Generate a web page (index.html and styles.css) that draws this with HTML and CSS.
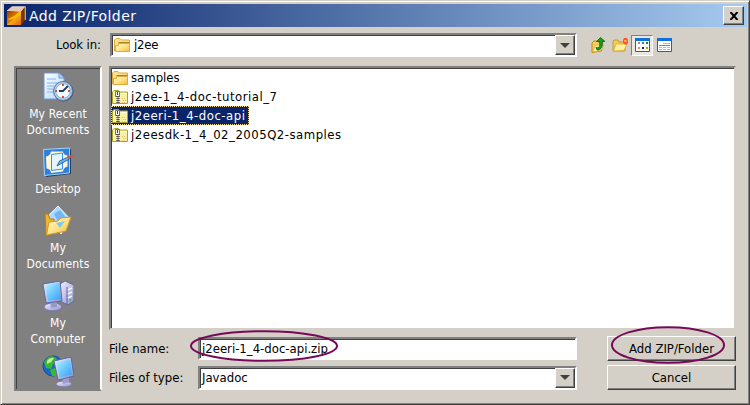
FILE: index.html
```html
<!DOCTYPE html>
<html lang="en">
<head>
<meta charset="utf-8">
<title>Add ZIP/Folder</title>
<link rel="stylesheet" href="styles.css">
</head>
<body>
<svg class="defs" width="0" height="0" aria-hidden="true">
  <defs>
    <linearGradient id="gold" x1="0" y1="0" x2="1" y2="1"><stop offset="0" stop-color="#fffbd0"/><stop offset=".5" stop-color="#ffe58a"/><stop offset="1" stop-color="#f0b840"/></linearGradient>
    <linearGradient id="screen" x1="0" y1="0" x2="1" y2="1"><stop offset="0" stop-color="#b8f4ff"/><stop offset=".5" stop-color="#6cc8fc"/><stop offset="1" stop-color="#3c9cf4"/></linearGradient>
    <linearGradient id="metal" x1="0" y1="0" x2="1" y2="1"><stop offset="0" stop-color="#f4f4ff"/><stop offset="1" stop-color="#8c8cc8"/></linearGradient>
    <linearGradient id="paper" x1="0" y1="0" x2="1" y2="1"><stop offset="0" stop-color="#fff"/><stop offset="1" stop-color="#b4d8fc"/></linearGradient>
    <linearGradient id="cube" x1="0" y1="0" x2="1" y2="1"><stop offset="0" stop-color="#9c4800"/><stop offset=".45" stop-color="#e07800"/><stop offset=".55" stop-color="#f8a820"/><stop offset="1" stop-color="#e06000"/></linearGradient>
    <symbol id="folder" viewBox="0 0 16 16">
      <path d="M.5 14V3L2 1.500h4L7.500 3H15.500V14Z" fill="#fbe08c" stroke="#dca83c"/>
      <path d="M4.500 5.500h11" stroke="#b08020"/>
      <path d="M1.500 14.500V8.500h3V6.500h11v8Z" fill="url(#gold)" stroke="#e0ac3c"/>
    </symbol>
    <symbol id="zip" viewBox="0 0 16 16">
      <path d="M.5 14.500V3L2 1.500h4.500L8 3h7.500v11.500Z" fill="#f8f2a4" stroke="#aaa426"/>
      <path d="M9 4.500h6" stroke="#fffde0"/>
      <path d="M3.500 2.500h4v5h-4z" fill="#f4f4f4" stroke="#777"/>
      <path d="M5 3h1v3H5z" fill="#444"/>
      <path d="M6 7v8" stroke="#222" stroke-width="3" stroke-dasharray="1 1"/>
      <path d="M6 7v8" stroke="#888"/>
      <path d="M10 9h1v1h-1zm2 0h1v1h-1zm-1 2h1v1h-1zm2 0h1v1h-1zm-3 2h1v1h-1zm2 0h1v1h-1z" fill="#f0b870"/>
    </symbol>
  </defs>
</svg>
<div class="window">
  <header class="titlebar">
    <svg class="app" viewBox="0 0 20 20"><path d="M1 5 6 1h13v13l-4 5H1Z" fill="#743000"/><path d="M1 5 6 1h13l-4 5Z" fill="#e8c8b8"/><path d="M1 6h14v13H1Z" fill="url(#cube)"/><path d="M2 13 8 10l5-4h2v2l-5 4-7 2Z" fill="#f8bc00"/><path d="M15 6 19 1v13l-4 5Z" fill="#763800"/><path d="M1 5 6 .7h13.300V14" fill="none" stroke="#fff3df" stroke-width=".8"/></svg>
    <h1>Add ZIP/Folder</h1>
    <button class="close" aria-label="Close"><svg width="10" height="8" viewBox="0 0 10 8"><path d="m1.500 0 7 8m0-8-7 8" stroke="#000" stroke-width="2"/></svg></button>
  </header>
  <div class="toolbar">
    <span class="lookin">Look in:</span>
    <div class="combo place"><svg class="small" viewBox="0 0 16 16"><use href="#folder"/></svg><span class="snug">j2ee</span><i class="arrow"></i></div>
    <div class="tools">
      <span class="tool"><svg width="16" height="16" viewBox="0 0 16 16"><path d="M2 15.500V6l2-2h3l1.500 1h4L11.500 14Z" fill="#f4d060" stroke="#b88818"/><path d="m2.500 15 3-7H14l-3 5.500Z" fill="#fff0a0" stroke="#dda820" stroke-width=".7"/><path d="M6 10.500c4 1 4-2 3.500-6H6.500L10.500.5l4.500 4h-2.800C12.700 9 12 13 7 13Z" fill="#179b20" stroke="#086410" stroke-width=".8"/></svg></span>
      <span class="tool"><svg width="16" height="16" viewBox="0 0 16 16"><path d="M1 14V4l1-1h4l1 2h6v9Z" fill="#f3cc57" stroke="#c89830"/><path d="M1.500 14 4 7h11l-3 6.500Z" fill="#fff1a0" stroke="#dda830" stroke-width=".8"/><path d="M12 1h3l1 2v3l-2 2-3-2V3Z" fill="#ff5428"/><path d="M12.500 3h2v2h-2z" fill="#ffd060"/></svg></span>
      <span class="tool pressed"><svg width="15" height="14" viewBox="0 0 15 14"><path d="M.5.5h14v13H.5Z" fill="#fff" stroke="#0868c8"/><path d="M0 0h15v3H0z" fill="#1070d8"/><path d="M3 4h2v2H3z" fill="#8c8c9c"/><path d="M7 4h2v2H7z" fill="#2488d8"/><path d="M11 4h2v2h-2z" fill="#109020"/><path d="M3 9h2v2H3z" fill="#f08060"/><path d="M7 9h2v2H7z" fill="#082888"/><path d="M11 9h2v2h-2z" fill="#c89800"/></svg></span>
      <span class="tool"><svg width="15" height="14" viewBox="0 0 15 14"><path d="M.5.5h14v13H.5Z" fill="#fff" stroke="#0868c8"/><path d="M0 0h15v3H0z" fill="#1070d8"/><path d="M6 5.500h7M2 9.500h3m1 0h3m1 0h3M2 11.500h3m1 0h3m1 0h3" stroke="#b4b8bc"/><path d="M2 7.500h11" stroke="#4090e0"/></svg></span>
    </div>
  </div>
  <main class="content">
    <nav class="places">
      <a><svg viewBox="0 0 32 32"><path d="M2 2h15l5 5v21H2Z" fill="url(#paper)" stroke="#6898e0"/><path d="M17 2v5h5" fill="#b0d0ff" stroke="#6898e0"/><path d="M5 8h9M5 12h11M5 15h7M5 18h6M5 21h6" stroke="#80b4f4"/><circle cx="21.500" cy="20.500" r="10" fill="#454f70"/><circle cx="21" cy="20" r="9.500" fill="#b4d0ec" stroke="#5878a8"/><circle cx="21" cy="20" r="7.300" fill="#f4fbff" stroke="#8cb0d8"/><path d="m26 15-5 5h-4" fill="none" stroke="#243864" stroke-width="1.800"/><path d="M20 13h2v2h-2zm0 12h2v2h-2zm-7-6h2v2h-2zm13 0h2v2h-2z" fill="#e85020"/></svg><span>My Recent</span><span>Documents</span></a>
      <a><svg viewBox="0 0 32 32"><path d="M3 4 29 3v25L4 31Z" fill="#263a60"/><path d="M1.500 3.500 27.500 2v25L2.500 29.500Z" fill="#2f80dc" stroke="#9cd8fc"/><path d="M9 5.500h12q0 3 4.500 4v11q-4 1-4.500 5l-12 1.500q0-4-4.500-4.500l-.5-12Q8 10 9 5.500Z" fill="#fff6d4"/><path d="m9.500 8.500 11-1.500v16l-11 1.500Z" fill="#e4f4ff" stroke="#3890e0"/><path d="m15 20 2.500-5 8.500-4 1.500 2-9 5Z" fill="#62b4ec" stroke="#284c80" stroke-width=".8"/><path d="m25 11 5-2.500 1.500 1.500-4.500 3Z" fill="#e05038"/></svg><span>Desktop</span></a>
      <a><svg viewBox="0 0 32 32"><path d="M5 12 16 1l12 13-9 15Z" fill="#acd8ff" stroke="#e8faff"/><path d="m12 9 6-4 6 8-7 5Z" fill="#6eb6f8"/><path d="M3 9h3l2 5h4v13l-8 4Z" fill="#efb52c" stroke="#b87814"/><path d="m4.500 30 2.500-13 9-1 3-3 10-1-5 14-19 4Z" fill="url(#gold)" stroke="#d49824"/><path d="m14 18 9-2-5 7Z" fill="#80c8f4"/></svg><span>My</span><span>Documents</span></a>
      <a><svg viewBox="0 0 32 32"><path d="m18 4 5-3 9 4v16l-6 4-8-4Z" fill="url(#metal)" stroke="#6868a0"/><path d="M25 7v18" stroke="#6464a8"/><path d="m26 10 4-2m-4 6 4-2m-4 6 4-2" stroke="#f4f4ff" stroke-width="1.500"/><path d="M27 19h2v2h-2z" fill="#38d050"/><ellipse cx="11" cy="27" rx="9" ry="4" fill="url(#metal)" stroke="#7070a4"/><path d="m8 21 7-1v7l-6 1Z" fill="#9a9ac8"/><path d="m1 4 17-3 2 20-16 2Z" fill="url(#metal)" stroke="#5868a8"/><path d="m3 5 14-2 2 16-13 2Z" fill="url(#screen)"/></svg><span>My</span><span>Computer</span></a>
      <a><svg viewBox="0 0 32 32"><circle cx="11" cy="11" r="10" fill="#1768d0" stroke="#174890"/><path d="M2 7q5-8 11-5l3 4-5 3-2 5-5-1Zm6 8 7-3 3 4-3 5h-5Z" fill="#38b830"/><path d="M5 6q3-4 7-3l-3 4-4 2Z" fill="#c4f094"/><ellipse cx="22" cy="29" rx="8" ry="3" fill="url(#metal)" stroke="#7878a8"/><path d="m20 22 7-1v6l-6 2Z" fill="#9c9ccc"/><path d="m12 6 17-4 3 19-16 4Z" fill="url(#metal)" stroke="#5868a8"/><path d="m14 7.500 14-3 2 15-12 3Z" fill="url(#screen)"/></svg></a>
    </nav>
    <section class="right">
      <ul class="files">
        <li><svg class="small" viewBox="0 0 16 16"><use href="#folder"/></svg><span>samples</span></li>
        <li><svg class="small" viewBox="0 0 16 16"><use href="#zip"/></svg><span class="wide">j2ee-1_4-doc-tutorial_7</span></li>
        <li class="selected"><svg class="small" viewBox="0 0 16 16"><use href="#zip"/></svg><span class="wide">j2eeri-1_4-doc-api</span></li>
        <li><svg class="small" viewBox="0 0 16 16"><use href="#zip"/></svg><span class="wide">j2eesdk-1_4_02_2005Q2-samples</span></li>
      </ul>
      <div class="form">
        <span>File name:</span>
        <div class="field"><span>j2eeri-1_4-doc-api.zip</span><svg class="mark mark-name" viewBox="0 0 148 32"><ellipse cx="74" cy="16" rx="73" ry="14.800"/></svg></div>
        <div class="button"><span>Add ZIP/Folder</span><svg class="mark mark-add" viewBox="0 0 114 38"><ellipse cx="57" cy="19" rx="56" ry="17.800"/></svg></div>
        <span>Files of type:</span>
        <div class="combo type"><span>Javadoc</span><i class="arrow"></i></div>
        <div class="button"><span>Cancel</span></div>
      </div>
    </section>
  </main>
</div>
</body>
</html>
```
FILE: styles.css
```css
* { box-sizing: border-box; }
body {
  margin: 0;
  background: #d4d0c8;
  font: 13px/16px "DejaVu Sans Condensed", "DejaVu Sans", sans-serif;
  font-stretch: condensed;
  color: #000;
}
span, h1 { white-space: nowrap; }
.defs { position: absolute; }
.window {
  width: 750px;
  height: 405px;
  padding: 2px;
  background: #d4d0c8;
  border: 1px solid;
  border-color: #d4d0c8 #404040 #404040 #d4d0c8;
  box-shadow: inset 1px 1px #fff, inset -1px -1px #808080;
}
.titlebar {
  display: flex;
  align-items: center;
  height: 23px;
  margin: 1px 0 0 1px;
  padding: 0 3px 0 2px;
  background: linear-gradient(90deg, #0a246a, #a6caf0);
}
.app { width: 20px; height: 20px; }
h1 {
  flex: 1;
  margin: 0 0 0 3px;
  color: #fff;
  font: 14px/16px "DejaVu Sans", sans-serif;
  font-stretch: normal;
  letter-spacing: .4px;
}
.close, .arrow, .button {
  border: 1px solid;
  border-color: #fff #404040 #404040 #fff;
  background: #d4d0c8;
  box-shadow: inset -1px -1px #808080;
}
.close { display: flex; align-items: center; justify-content: center; width: 21px; height: 19px; padding: 0; }
.toolbar { display: flex; align-items: center; height: 24px; margin-top: 6px; }
.lookin { width: 107px; padding-left: 53px; letter-spacing: -.1px; }
.snug { letter-spacing: -.2px; }
.wide { letter-spacing: .5px; }
.combo, .field {
  display: flex;
  align-items: center;
  border: 2px solid;
  border-color: #808080 #fff #fff #808080;
  background: #fff;
  box-shadow: inset 1px 1px #404040;
}
.place { width: 467px; height: 24px; padding-left: 2px; gap: 4px; }
.small { flex: none; width: 16px; height: 16px; }
.arrow { display: flex; align-items: center; justify-content: center; width: 20px; height: 20px; margin-left: auto; }
.arrow::after { content: ""; border: 5px solid transparent; border-top-color: #404040; border-bottom: 0; }
.tools { display: flex; align-items: center; margin-left: 10px; }
.tool { display: flex; align-items: center; justify-content: center; width: 22px; height: 21px; }
.pressed { border: 1px solid; border-color: #808080 #fff #fff #808080; background: #e9e7e3; }
.content { display: flex; gap: 7px; margin: 9px 10px 0 11px; height: 325px; }
.places {
  display: flex;
  flex-direction: column;
  gap: 8px;
  width: 88px;
  padding-top: 3px;
  overflow: hidden;
  border: 2px solid;
  border-color: #808080 #fff #808080 #808080;
  background: #808080;
  box-shadow: inset 1px 1px #404040;
  color: #fff;
  font-size: 12px;
  letter-spacing: .15px;
}
.places a { display: flex; flex-direction: column; align-items: center; }
.places a svg { width: 32px; height: 32px; margin-bottom: 3px; }
.right { width: 627px; }
.files {
  height: 264px;
  margin: 0;
  padding: 0;
  list-style: none;
  border: 2px solid;
  border-color: #808080 #d4d0c8 #d4d0c8 #808080;
  background: #fff;
  box-shadow: inset 1px 1px #404040;
}
.files li { display: flex; align-items: center; gap: 3px; width: 138px; height: 19px; padding-left: 1px; }
.files .selected { background: #0a246a; color: #fff; outline: 1px dotted #f5db95; outline-offset: -1px; }
.form {
  display: grid;
  grid-template-columns: 89px 379px 129px;
  grid-template-rows: 25px 25px;
  row-gap: 4px;
  margin-top: 6px;
  align-items: center;
}
.field { position: relative; height: 23px; padding-left: 2px; }
.type { height: 24px; padding-left: 2px; }
.button { position: relative; display: flex; align-items: center; justify-content: center; height: 25px; margin-left: 30px; width: 129px; }
.mark { position: absolute; fill: none; stroke: #780858; stroke-width: 2; overflow: visible; }
.mark-name { left: -10px; top: -9px; width: 148px; height: 32px; }
.mark-add { left: 3px; top: -11px; width: 114px; height: 38px; }
```
